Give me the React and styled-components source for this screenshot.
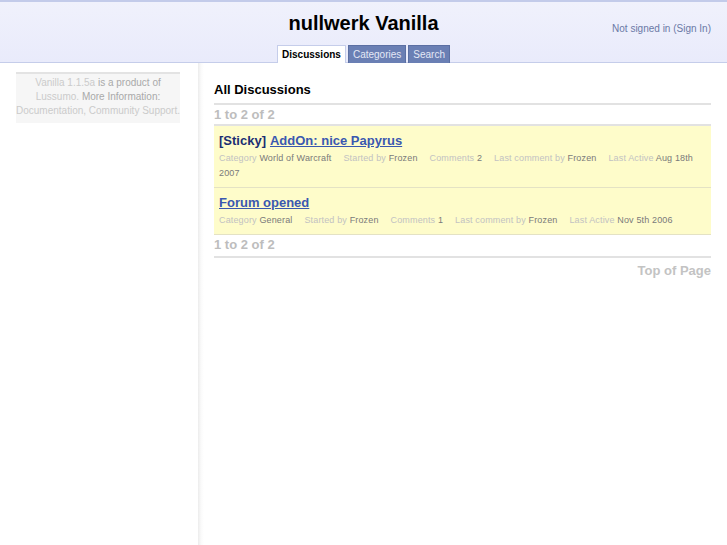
import React from 'react';
import styled, {createGlobalStyle} from 'styled-components';

const GlobalStyle = createGlobalStyle`
html, body {
    margin: 0;
    padding: 0;
    background: #fff;
    font-family: 'Liberation Sans', Arial, sans-serif;
}
`

const Header = styled.div`
height: 63px;
border-top: 2px solid #c3cbea;
border-bottom: 1px solid #c5cdea;
background: linear-gradient(to bottom, #f0f1fc, #e9ebfb);
display: grid;
grid-template-columns: 1fr auto 1fr;
grid-template-rows: 1fr auto;
box-sizing: border-box;

h1 {
    grid-column: 2;
    grid-row: 1;
    margin: 0;
    padding-top: 10px;
    font-size: 20px;
    font-weight: 700;
    color: #000;
    text-align: center;
}
`

const SignIn = styled.div`
grid-column: 3;
grid-row: 1;
justify-self: end;
padding: 21px 16px 0 0;
font-size: 10px;
color: #6b79a6;
`

const Tabs = styled.div`
grid-column: 1 / 4;
grid-row: 2;
display: flex;
justify-content: center;
gap: 2px;
margin-bottom: -1px;
`

const Tab = styled.div`
height: 17px;
padding: 0 4px;
display: flex;
align-items: center;
font-size: 10px;
font-weight: ${p => p.active ? 700 : 400};
color: ${p => p.active ? '#000' : '#e4e8f6'};
background: ${p => p.active ? '#fff' : '#6a7fb4'};
border: 1px solid ${p => p.active ? '#c5cdea' : '#5b6fa3'};
border-bottom: none;
`

const Body = styled.div`
display: flex;
min-height: 482px;
`

const Side = styled.div`
width: 198px;
padding: 9px 18px 0 16px;
box-sizing: border-box;
`

const Panel = styled.div`
background: #f6f6f6;
border-top: 2px solid #e3e3e3;
padding: 2px 0 5px;
font-size: 10px;
line-height: 14px;
color: #cbcbcb;
text-align: center;

b {
    font-weight: 400;
    color: #a9a9a9;
}
`

const Main = styled.div`
flex: 1;
padding: 19px 16px 0 16px;
background: linear-gradient(to right, #ececec 0, #fafafa 3px, #fff 6px);
`

const Title = styled.h2`
margin: 0;
padding-bottom: 6px;
font-size: 13px;
line-height: 15px;
font-weight: 700;
color: #000;
border-bottom: 2px solid #e2e2e2;
`

const Pager = styled.div`
padding: 2px 0 ${p => p.bottom ? '4px' : '2px'};
font-size: 13px;
line-height: 15px;
font-weight: 700;
color: #bdbdbd;
border-bottom: 2px solid #e2e2e2;
`

const Row = styled.div`
background: #fefcca;
padding: 7px 5px 6px;
border-bottom: 1px solid #e4e2c4;
`

const Topic = styled.div`
font-size: 13px;
line-height: 15px;
font-weight: 700;
color: #1b2e73;
margin-bottom: 3px;

a {
    color: #3a58b0;
    text-decoration: underline;
    margin-left: ${p => p.sticky ? '4px' : 0};
}
`

const Meta = styled.div`
font-size: 9px;
line-height: 15px;
letter-spacing: 0.15px;
color: #c2c2c2;

span {
    margin-right: 12px;
}

b {
    font-weight: 400;
    color: #7a7a7a;
}
`

const TopLink = styled.div`
padding-top: 5px;
text-align: right;
font-size: 13px;
line-height: 15px;
font-weight: 700;
color: #c3c3c3;
`

const discussions = [
    {sticky: true, title: 'AddOn: nice Papyrus', category: 'World of Warcraft', comments: 2, active: 'Aug 18th 2007'},
    {sticky: false, title: 'Forum opened', category: 'General', comments: 1, active: 'Nov 5th 2006'}
];

const App = () => {
    return (
        <>
            <GlobalStyle/>
            <Header>
                <h1>nullwerk Vanilla</h1>
                <SignIn>Not signed in (Sign In)</SignIn>
                <Tabs>
                    <Tab active>Discussions</Tab>
                    <Tab>Categories</Tab>
                    <Tab>Search</Tab>
                </Tabs>
            </Header>
            <Body>
                <Side>
                    <Panel>
                        Vanilla 1.1.5a <b>is a product of</b><br/>
                        Lussumo. <b>More Information:</b><br/>
                        Documentation, Community Support.
                    </Panel>
                </Side>
                <Main>
                    <Title>All Discussions</Title>
                    <Pager>1 to 2 of 2</Pager>
                    {discussions.map(d => (
                        <Row key={d.title}>
                            <Topic sticky={d.sticky}>
                                {d.sticky && '[Sticky]'}
                                <a>{d.title}</a>
                            </Topic>
                            <Meta>
                                <span>Category <b>{d.category}</b></span>
                                <span>Started by <b>Frozen</b></span>
                                <span>Comments <b>{d.comments}</b></span>
                                <span>Last comment by <b>Frozen</b></span>
                                <span>Last Active <b>{d.active}</b></span>
                            </Meta>
                        </Row>
                    ))}
                    <Pager bottom>1 to 2 of 2</Pager>
                    <TopLink>Top of Page</TopLink>
                </Main>
            </Body>
        </>
    );
};

export default App;
